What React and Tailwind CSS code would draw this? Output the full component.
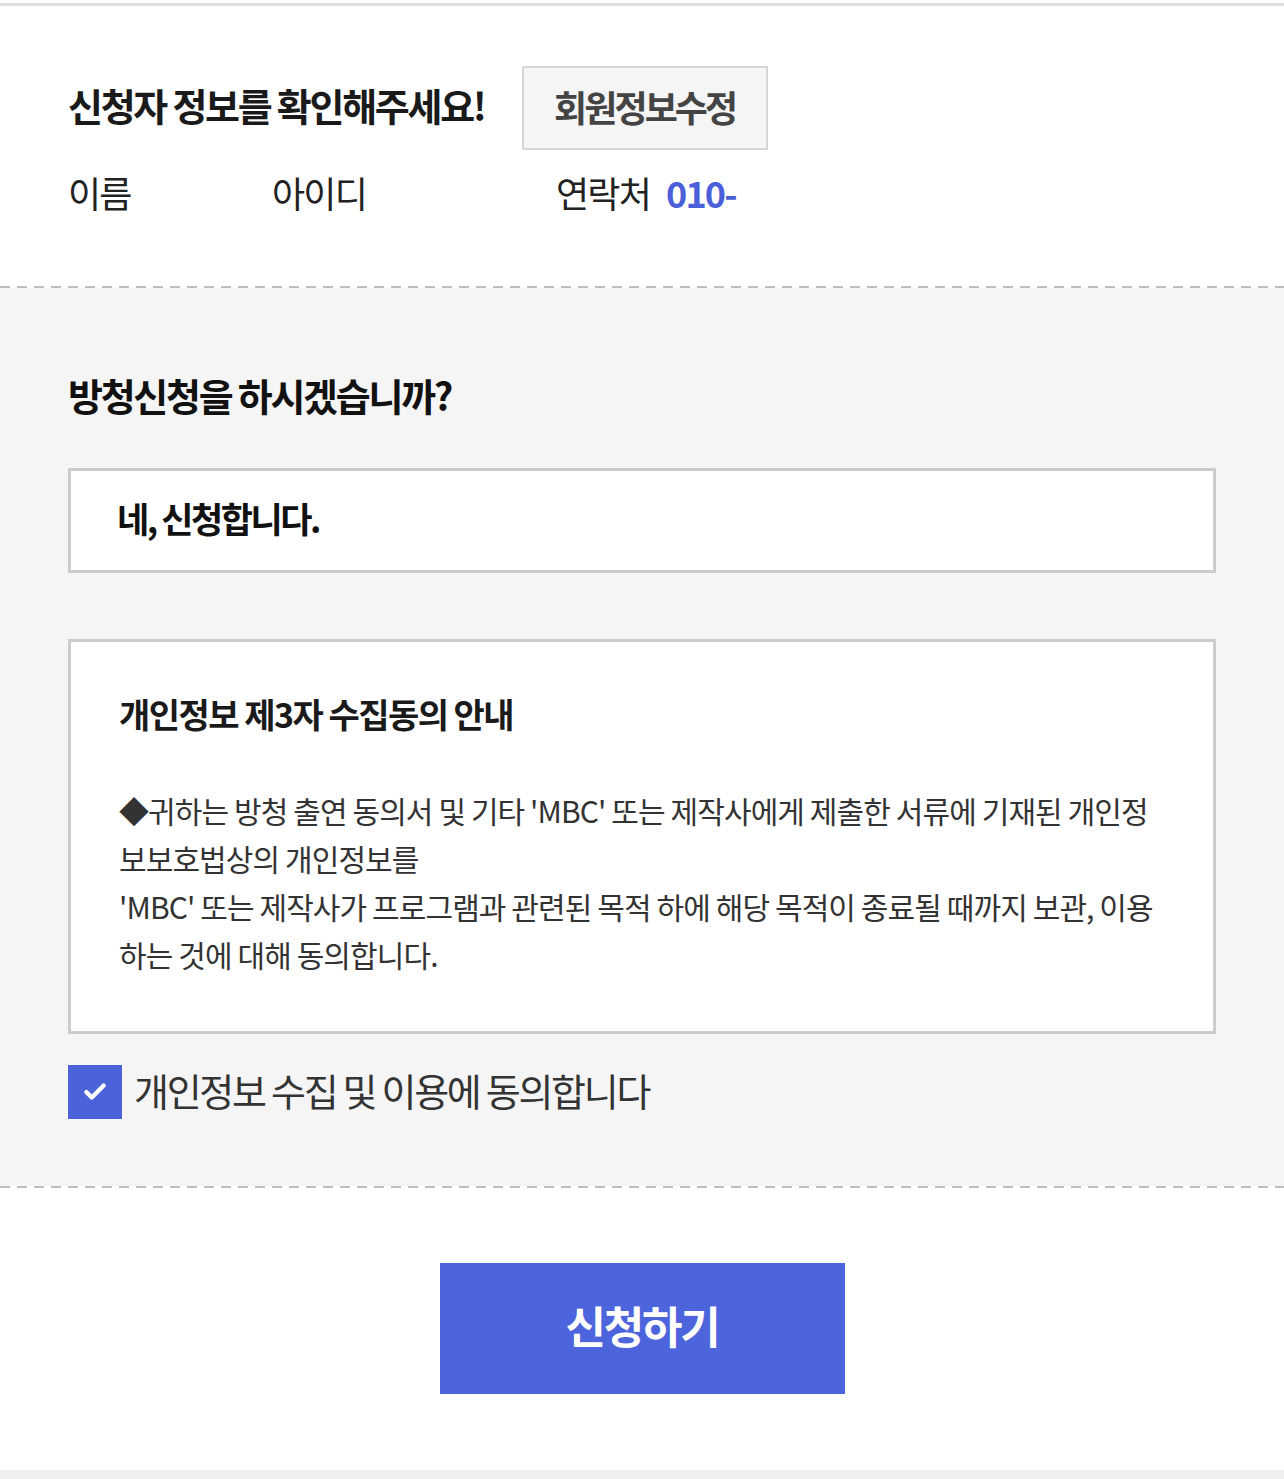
import { Check } from 'lucide-react';

const font = { fontFamily: '"Noto Sans CJK KR", "Noto Sans", sans-serif' };

const Dashed = () => (
  <div className="h-[2px] bg-[repeating-linear-gradient(90deg,#bdbdbd_0_10px,transparent_10px_17px)]" />
);

const App = () => {
  return (
    <div className="w-[1284px] min-h-[1479px] bg-white text-[#222]" style={font}>
      <div className="h-[3px]" />
      <div className="h-[3px] bg-[#dedede]" />

      {/* 신청자 정보 */}
      <section className="px-[68px] pt-[60px] pb-[72px]">
        <div className="flex items-center gap-[37px]">
          <h2 className="pb-[6px] text-[38px] font-bold tracking-[-0.06em] leading-none text-[#1a1a1a]">
            신청자 정보를 확인해주세요!
          </h2>
          <button className="w-[246px] h-[84px] pb-[5px] bg-[#f5f5f5] border-2 border-[#d6d6d6] text-[36px] font-bold tracking-[-0.08em] text-[#444]">
            회원정보수정
          </button>
        </div>
        <div className="flex items-center mt-[20px] text-[36px] tracking-[-0.05em] leading-[44px] text-[#222]">
          <span className="w-[204px]">이름</span>
          <span className="w-[284px]">아이디</span>
          <span>연락처</span>
          <span className="ml-[16px] font-bold text-[#4a5fd9] tracking-[-0.05em]">010-</span>
        </div>
      </section>

      <Dashed />

      {/* 방청 신청 */}
      <section className="bg-[#f5f5f5] px-[68px] pt-[88px] pb-[67px]">
        <h3 className="pb-[2px] text-[38px] font-bold tracking-[-0.06em] leading-none text-[#111]">
          방청신청을 하시겠습니까?
        </h3>

        <div className="mt-[52px] w-[1148px] h-[105px] bg-white border-[3px] border-[#cccccc] flex items-center px-[46px] pb-[4px]">
          <span className="text-[35px] font-bold tracking-[-0.07em] text-[#111]">네, 신청합니다.</span>
        </div>

        <div className="mt-[66px] w-[1148px] h-[395px] bg-white border-[3px] border-[#cccccc] px-[48px] pt-[55px]">
          <h4 className="text-[34px] font-bold tracking-[-0.045em] leading-none text-[#1a1a1a]">
            개인정보 제3자 수집동의 안내
          </h4>
          <p className="mt-[55px] text-[30px] leading-[48px] tracking-[-0.03em] text-[#333] whitespace-nowrap">
            ◆귀하는 방청 출연 동의서 및 기타 'MBC' 또는 제작사에게 제출한 서류에 기재된 개인정
            <br />
            보보호법상의 개인정보를
            <br />
            'MBC' 또는 제작사가 프로그램과 관련된 목적 하에 해당 목적이 종료될 때까지 보관, 이용
            <br />
            하는 것에 대해 동의합니다.
          </p>
        </div>

        <label className="mt-[31px] flex items-center gap-[12px]">
          <span className="w-[54px] h-[54px] bg-[#4a63d9] flex items-center justify-center">
            <Check className="w-[26px] h-[26px] text-white" strokeWidth={4} />
          </span>
          <span className="pb-[4px] text-[38px] tracking-[-0.06em] text-[#333] leading-none">
            개인정보 수집 및 이용에 동의합니다
          </span>
        </label>
      </section>

      <Dashed />

      {/* 버튼 */}
      <div className="flex justify-center pt-[75px] pb-[76px]">
        <button className="w-[405px] h-[131px] pb-[8px] bg-[#4c64dc] text-white text-[44px] font-bold tracking-[-0.05em]">
          신청하기
        </button>
      </div>
      <div className="h-[9px] bg-[#f0f0f0]" />
    </div>
  );
};

export default App;
